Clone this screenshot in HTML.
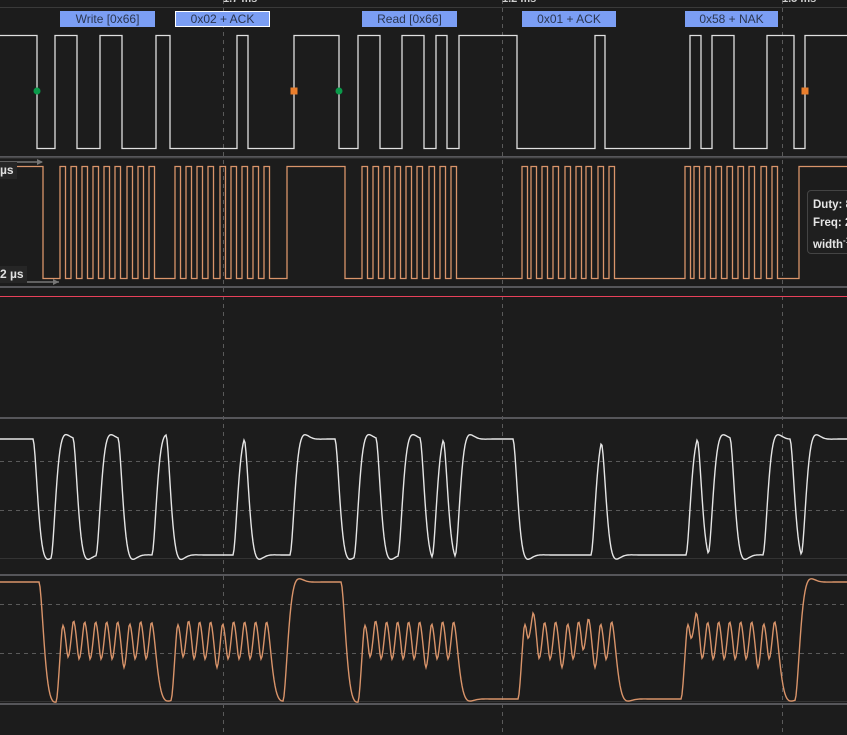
<!DOCTYPE html>
<html><head><meta charset="utf-8">
<style>
html,body{margin:0;padding:0;background:#1c1c1c;width:847px;height:735px;overflow:hidden;font-family:"Liberation Sans",sans-serif}
svg{position:absolute;left:0;top:0}
.lbl{position:absolute;top:11px;height:16px;background:#7b9ef4;color:#2b3650;font-size:12px;line-height:16px;text-align:center;box-sizing:border-box}
.tag{position:absolute;background:#262626;color:#e0e0e0;font-size:12px;font-weight:bold;padding:0 3px;line-height:17px}
.tip{position:absolute;left:807px;top:190px;width:60px;height:64px;border:1px solid #444;border-radius:4px;background:#1f1f1f;color:#e6e6e6;font-size:11.5px;font-weight:bold;line-height:18px;padding:5px 0 0 5px;box-sizing:border-box}
</style></head><body>
<svg width="847" height="735" id="s">
<g stroke="#3a3a3a" stroke-width="1"><line x1="0" y1="7.5" x2="847" y2="7.5"/></g>
<g stroke="#5a5a5a" stroke-width="1" stroke-dasharray="4,4">
<line x1="223.5" y1="0" x2="223.5" y2="735"/><line x1="502.5" y1="0" x2="502.5" y2="735"/><line x1="782.5" y1="0" x2="782.5" y2="735"/>
<line x1="0" y1="461.5" x2="847" y2="461.5"/><line x1="0" y1="510.5" x2="847" y2="510.5"/>
<line x1="0" y1="604.5" x2="847" y2="604.5"/><line x1="0" y1="653.5" x2="847" y2="653.5"/>
</g>
<g stroke="#56565a" stroke-width="2">
<line x1="0" y1="157" x2="847" y2="157"/><line x1="0" y1="287" x2="847" y2="287"/>
<line x1="0" y1="418" x2="847" y2="418"/><line x1="0" y1="575" x2="847" y2="575"/><line x1="0" y1="704" x2="847" y2="704"/>
</g>
<line x1="0" y1="158" x2="847" y2="158" stroke="#3a3a3a"/>
<line x1="0" y1="558.5" x2="847" y2="558.5" stroke="#333"/>
<line x1="0" y1="701.5" x2="847" y2="701.5" stroke="#333"/>
<line x1="0" y1="296.5" x2="847" y2="296.5" stroke="#e8415a" stroke-width="1"/>
<g stroke="#777" stroke-width="1.5"><line x1="0" y1="162" x2="42" y2="162"/><line x1="0" y1="282" x2="59" y2="282"/></g>
<path d="M37 159 l6 3 l-6 3z M53 279 l6 3 l-6 3z" fill="#777"/>
<path id="sda" fill="none" stroke="#e0e0e0" stroke-width="1.3"/>
<path id="scl" fill="none" stroke="#d9946a" stroke-width="1.3"/>
<path id="asda" fill="none" stroke="#e6e6e6" stroke-width="1.4"/>
<path id="ascl" fill="none" stroke="#d9946a" stroke-width="1.4"/>
<circle cx="37" cy="91" r="3.5" fill="#0a9a4a"/><circle cx="339" cy="91" r="3.5" fill="#0a9a4a"/>
<rect x="290.5" y="87.5" width="7" height="7" fill="#ea7e2c"/><rect x="801.5" y="87.5" width="7" height="7" fill="#ea7e2c"/>
<g fill="#cfcfcf" font-size="11" font-weight="bold" font-family="Liberation Sans"><text x="223" y="2">1.7 ms</text><text x="502" y="2">1.2 ms</text><text x="782" y="2">1.5 ms</text></g>
</svg>
<div class="lbl" style="left:60px;width:95px">Write [0x66]</div>
<div class="lbl" style="left:175px;width:95px;border:1px solid #fff;line-height:14px">0x02 + ACK</div>
<div class="lbl" style="left:362px;width:95px">Read [0x66]</div>
<div class="lbl" style="left:522px;width:94px">0x01 + ACK</div>
<div class="lbl" style="left:685px;width:93px">0x58 + NAK</div>
<div class="tag" style="left:-3px;top:162px">µs</div>
<div class="tag" style="left:-3px;top:266px">2 µs</div>
<div class="tip">Duty: 8<br>Freq: 2<br>width<sup style="font-size:8px">-1</sup></div>
<script>
var sdaE=[37,55,77,100,122,156,170,237,248,294,339,358,380,402,424,436,447,459,517,595,605,690,701,712,734,767,794,805];
var sclE=[43];
function pulses(a){a.forEach(function(p){sclE.push(p,p+5.5)})}
pulses([60,71,82,93,104,115,127,138,149]);pulses([175,186,197,208,220,231,242,253,264]);
sclE.push(287,345);
pulses([362,373,384,395,406,417,429,440,451]);pulses([522,531,542,553,565,576,586,598,609]);pulses([685,694,705,716,727,738,749,761,772]);
sclE.push(799);
function dig(E,yh,yl){var d="M0 "+yh,h=true;E.forEach(function(x){var y=h?yl:yh;d+=" L"+x+" "+(h?yh:yl)+" L"+x+" "+y;h=!h});d+=" L847 "+(h?yh:yl);return d}
document.getElementById('sda').setAttribute('d',dig(sdaE,35.5,148.5));
document.getElementById('scl').setAttribute('d',dig(sclE,166.5,278.5));
function lvl(E,x){var h=1;for(var i=0;i<E.length;i++){if(x>=E[i])h=1-h;else break}return h}
function ana(E,yh,yl,shift,wn,z){var dt=0.05,y=1,v=0,d="",x;
 for(x=-20;x<=850;x+=dt){var u=lvl(E,x+shift);var a=wn*wn*(u-y)-2*z*wn*v;v+=a*dt;y+=v*dt;
  if(x>=0&&Math.abs(x-Math.round(x))<dt/2){var py=yl-(yl-yh)*y;d+=(d?" L":"M")+Math.round(x)+" "+py.toFixed(1)}}
 return d}
document.getElementById('asda').setAttribute('d',ana(sdaE,439,555,4,0.3,0.72));
document.getElementById('ascl').setAttribute('d',ana(sclE,582,699,4,0.29,0.75));
</script>
</body></html>
